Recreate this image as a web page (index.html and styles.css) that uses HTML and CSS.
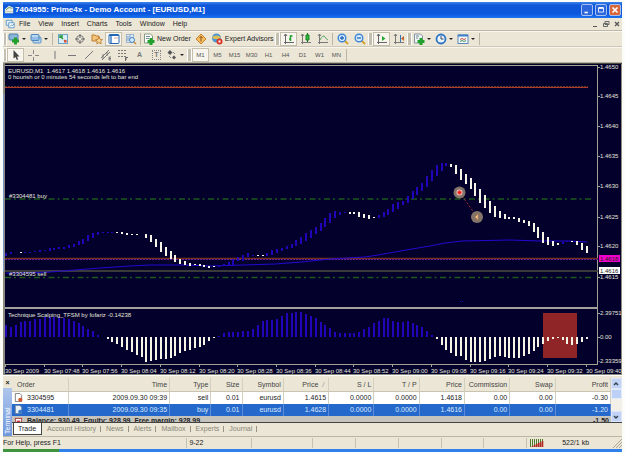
FILE: index.html
```html
<!DOCTYPE html>
<html lang="en">
<head>
<meta charset="utf-8">
<title>7404955: Prime4x - Demo Account - [EURUSD,M1]</title>
<link rel="stylesheet" href="styles.css">
</head>
<body>
<div class="window">
  <header class="titlebar">
    <svg class="icon" viewBox="0 0 12 12"><path d="M1 5 6 1l5 2v7H1z" fill="#e9eee4"/><path d="M2 6 6 3l4 1" stroke="#4d9655" fill="none"/><path d="M1 8h10" stroke="#b5bda8"/></svg>
    <h1>7404955: Prime4x - Demo Account - [EURUSD,M1]</h1>
    <div class="caption">
      <button class="cap" aria-label="Minimize"><svg viewBox="0 0 12 12"><path d="M3 9h4" stroke="#fff" stroke-width="2"/></svg></button>
      <button class="cap" aria-label="Restore"><svg viewBox="0 0 12 12"><path d="M3 3.5h6v5H3z" stroke="#fff" fill="none"/><path d="M3 3.5h6" stroke="#fff" stroke-width="2"/></svg></button>
      <button class="cap close" aria-label="Close"><svg viewBox="0 0 12 12"><path d="m3 3 6 6M9 3 3 9" stroke="#fff" stroke-width="2"/></svg></button>
    </div>
  </header>

  <nav class="menubar">
    <svg class="icon" viewBox="0 0 12 12"><path d="M1.5 1.500h7v6h-7z" fill="#e4f0fa" stroke="#4f8fc4"/><path d="M4.500 4.500h6.500v6H4.500z" fill="#fff" stroke="#4f8fc4"/><path d="m6 9 2-2 1 1 2-2" stroke="#3f7fb4" fill="none"/></svg>
    <button>File</button><button>View</button><button>Insert</button><button>Charts</button><button>Tools</button><button>Window</button><button>Help</button>
    <div class="mdi">
      <button aria-label="Minimize chart"><svg viewBox="0 0 8 8"><path d="M2 6.500h4" stroke="#555"/></svg></button>
      <button aria-label="Restore chart"><svg viewBox="0 0 8 8"><path d="M3 1.500h4v3H3zM1.500 3.500h4v3h-4z" stroke="#666" fill="none"/></svg></button>
      <button aria-label="Close chart"><svg viewBox="0 0 8 8"><path d="m2 2 4 4M6 2 2 6" stroke="#555" stroke-width="1.300"/></svg></button>
    </div>
  </nav>

  <div class="toolbar">
    <span class="grip"></span>
    <button class="tool drop" aria-label="New chart"><svg viewBox="0 0 12 12"><rect x="1" y="1" width="9" height="6" rx="1" fill="#8ab6dc" stroke="#4b7ea8"/><path d="M7.500 4.500v7M4 8h7" stroke="#23a02b" stroke-width="3"/></svg></button>
    <button class="tool drop" aria-label="Profiles"><svg viewBox="0 0 12 12"><rect x="3" y="4" width="8" height="6" rx="1" fill="#b9d5ee" stroke="#5e93c4"/><rect x="1" y="1.500" width="8" height="6" rx="1" fill="#8fbde6" stroke="#4f86bb"/><path d="M2 3h6" stroke="#e4f1fc"/></svg></button>
    <span class="sep"></span>
    <button class="tool" aria-label="Market watch"><svg viewBox="0 0 12 12"><rect x="1.500" y="1.500" width="9" height="9" fill="#d9ecf7" stroke="#6da6c6"/><path d="M3 5V3h3M3 3l3 3" stroke="#249a3a" stroke-width="1.500" fill="none"/><path d="M7 7l2 2M9 7v2H7" stroke="#d24b2c" stroke-width="1.200" fill="none"/></svg></button>
    <button class="tool" aria-label="Crosshair data"><svg viewBox="0 0 12 12"><circle cx="6" cy="6" r="3.500" fill="none" stroke="#777"/><path d="M6 1v4M6 7v4M1 6h4M7 6h4" stroke="#666"/></svg></button>
    <button class="tool" aria-label="Navigator"><svg viewBox="0 0 12 12"><path d="M1 2h3l1 1h3v5H1z" fill="#f2c67c" stroke="#c07b2c"/><path d="m8 4 1 2.300 2.500.3-1.800 1.700.5 2.500L8 9.600l-2.200 1.200.4-2.500-1.700-1.700 2.500-.3z" fill="#f8d896" stroke="#b8722a" stroke-width=".8"/></svg></button>
    <button class="tool pressed" aria-label="Terminal"><svg viewBox="0 0 12 12"><rect x="1" y="1.500" width="10" height="9" rx="1" fill="#fff" stroke="#2566b4"/><path d="M1 2.500h10" stroke="#2566b4"/><path d="M3 3v7" stroke="#6ea0d8" stroke-width="2"/><path d="M6 5h4" stroke="#d6a79c"/></svg></button>
    <button class="tool" aria-label="Strategy tester"><svg viewBox="0 0 12 12"><rect x="1.500" y="1.500" width="7" height="8" fill="#e4edf5" stroke="#9ab5cd"/><path d="M3 3v5M5 2v5" stroke="#7696bb"/><circle cx="7" cy="7" r="2.500" fill="#d4ebfc" stroke="#4686c4"/><path d="m9 9 2 2" stroke="#cb8b2e" stroke-width="1.500"/></svg></button>
    <span class="sep"></span>
    <button class="tool labelled"><svg viewBox="0 0 12 12"><path d="M1.500 1h6l2 2v7h-8z" fill="#fff" stroke="#829a82"/><path d="M3 3.500h4M3 5.500h3" stroke="#789"/><path d="M8 5v7M4.500 8.500h7" stroke="#22a02c" stroke-width="3"/></svg>New Order</button>
    <button class="tool" aria-label="MetaEditor"><svg viewBox="0 0 12 12"><path d="m6 1 5 5-5 5-5-5z" fill="#f4bd62" stroke="#c9842c"/><path d="M6 3.500v5M4.500 5 6 3.500 7.500 5" stroke="#8a5215" fill="none"/></svg></button>
    <button class="tool labelled"><svg viewBox="0 0 12 12"><circle cx="5.500" cy="5" r="4.500" fill="#4f97cf"/><path d="M1 4q4-3 9 0l-2 2H3z" fill="#dcc056"/><circle cx="8.500" cy="8.500" r="3" fill="#d8342a"/><path d="M7.500 7.500h2v2h-2z" fill="#fff"/></svg>Expert Advisors</button>
    <span class="grip wide"></span>
    <button class="tool pressed" aria-label="Bar chart"><svg viewBox="0 0 12 12"><path d="M2.500 1v10M1 9.500h10M1 3l1.500-2L4 3" stroke="#666" fill="none"/><path d="M7.500 2v6M7.500 3h2M6 6h1" stroke="#24a534" stroke-width="1.500"/></svg></button>
    <button class="tool" aria-label="Candlesticks"><svg viewBox="0 0 12 12"><path d="M2.500 1v10M1 9.500h10M1 3l1.500-2L4 3" stroke="#777" fill="none"/><path d="M7.500 0v9" stroke="#176e20"/><path d="M6 2h3v5H6z" fill="#2fbb3c" stroke="#178124"/></svg></button>
    <button class="tool" aria-label="Line chart"><svg viewBox="0 0 12 12"><path d="M2.500 1v10M1 9.500h10M1 3l1.500-2L4 3" stroke="#777" fill="none"/><path d="M3 7Q6 1 8 4t3 3" stroke="#5fa368" fill="none"/></svg></button>
    <span class="sep"></span>
    <button class="tool" aria-label="Zoom in"><svg viewBox="0 0 12 12"><path d="m7.500 7.500 3.500 3.500" stroke="#d4a12e" stroke-width="2"/><circle cx="5" cy="5" r="3.800" fill="#d8ecff" stroke="#3f86d4" stroke-width="1.400"/><path d="M5 3v4M3 5h4" stroke="#2468b4" stroke-width="1.300"/></svg></button>
    <button class="tool" aria-label="Zoom out"><svg viewBox="0 0 12 12"><path d="m7.500 7.500 3.500 3.500" stroke="#d4a12e" stroke-width="2"/><circle cx="5" cy="5" r="3.800" fill="#d8ecff" stroke="#3f86d4" stroke-width="1.400"/><path d="M3 5h4" stroke="#2468b4" stroke-width="1.300"/></svg></button>
    <span class="grip wide"></span>
    <button class="tool pressed" aria-label="Auto scroll"><svg viewBox="0 0 12 12"><path d="M2.500 1v10M1 9.500h10M1 3l1.500-2L4 3" stroke="#666" fill="none"/><path d="m6 3 3.500 2.500L6 8z" fill="#25a834"/></svg></button>
    <button class="tool" aria-label="Chart shift"><svg viewBox="0 0 12 12"><path d="M2.500 1v10M1 9.500h10M1 3l1.500-2L4 3" stroke="#777" fill="none"/><path d="M7.500 2v7" stroke="#3578b8"/><path d="m11 3-3 2.500L11 8z" fill="#c4602c"/></svg></button>
    <span class="grip wide"></span>
    <button class="tool drop" aria-label="Indicators"><svg viewBox="0 0 12 12"><path d="M1.500 1h6l2 2v7h-8z" fill="#eef3f6" stroke="#8795a2"/><path d="M3 3h3M3 5h2" stroke="#789"/><path d="M8 5v7M4.500 8.500h7" stroke="#22a02c" stroke-width="3"/></svg></button>
    <button class="tool drop" aria-label="Periods"><svg viewBox="0 0 12 12"><circle cx="6" cy="6" r="4.500" fill="#eaf5ff" stroke="#2f74c4" stroke-width="1.800"/><path d="M6 3v3h2.500" stroke="#345" fill="none"/></svg></button>
    <button class="tool drop" aria-label="Templates"><svg viewBox="0 0 12 12"><rect x="1" y="2" width="10" height="8.500" fill="#f5f8fb" stroke="#5b87b4"/><path d="M1 2.500h10" stroke="#3f81c9" stroke-width="2"/><path d="M3 6.500l2-1 2 1 2-1" stroke="#c0503d" fill="none"/><path d="M3 8.500l2-1 2 1 2-1" stroke="#419256" fill="none"/></svg></button>
    <span class="sep"></span>
  </div>

  <div class="toolbar lines">
    <span class="grip"></span>
    <button class="tool pressed" aria-label="Cursor"><svg viewBox="0 0 12 12"><path d="M3.500 1v8.500L5.500 8l1.300 3 1.400-.6L7 7.500h2.500z" fill="#444"/></svg></button>
    <button class="tool" aria-label="Crosshair"><svg viewBox="0 0 12 12"><path d="M6.500 1v4M6.500 8v4M1 6.500h4M8 6.500h4" stroke="#888"/></svg></button>
    <span class="grip wide plain"></span>
    <button class="tool" aria-label="Vertical line"><svg viewBox="0 0 12 12"><path d="M6 2v8" stroke="#777"/></svg></button>
    <button class="tool" aria-label="Horizontal line"><svg viewBox="0 0 12 12"><path d="M2 6.500h8" stroke="#777"/></svg></button>
    <button class="tool" aria-label="Trendline"><svg viewBox="0 0 12 12"><path d="m2 10 8-8" stroke="#777"/></svg></button>
    <button class="tool" aria-label="Channel"><svg viewBox="0 0 12 12"><path d="m1 9 8-8M2 11l8-8M3 5v5M7 3v4M9 8v3h2M9 9.500h2M9 8h2" stroke="#777" fill="none"/></svg></button>
    <button class="tool" aria-label="Fibonacci"><svg viewBox="0 0 12 12"><path d="M1 1.500h9M1 4.500h9M1 7.500h9" stroke="#777" stroke-dasharray="2 1"/><path d="M8.500 12V8.500H11M8.500 10H10" stroke="#666" fill="none"/></svg></button>
    <button class="tool letter" aria-label="Text">A</button>
    <button class="tool letter" aria-label="Text label"><span class="boxed">T</span></button>
    <button class="tool drop" aria-label="Arrows"><svg viewBox="0 0 12 12"><path d="m4 1 2.500 2.500L4 6 1.500 3.500zM8 6.500l2 2-2 2-2-2z" fill="#555"/><path d="m7 3 2 2M3 7l2 2" stroke="#888"/></svg></button>
    <span class="grip wide"></span>
    <button class="tool period pressed">M1</button><button class="tool period">M5</button><button class="tool period">M15</button><button class="tool period">M30</button><button class="tool period">H1</button><button class="tool period">H4</button><button class="tool period">D1</button><button class="tool period">W1</button><button class="tool period">MN</button>
    <span class="sep"></span>
  </div>

  <main class="chart">
    <svg id="chart" viewBox="3 63 619 312" role="img" aria-label="EURUSD one minute chart">
      <rect x="3" y="63" width="619" height="312" fill="#8c8a80"/>
      <rect x="3" y="94" width="1" height="178" fill="#7c96c8"/>
      <rect x="5" y="64" width="616" height="310" fill="#03012c"/>
      <rect x="5" y="63" width="617" height="1" fill="#4c4a44"/>
      <g class="frame">
        <path d="M5 65.500h593"/><path d="M597.500 65v300"/><path d="M5 364.500h593"/>
      </g>
      <rect x="5" y="307" width="593" height="2" fill="#a3a09e"/>
      <path d="M5 86.500h583" stroke="#5a3a20" stroke-dasharray="2 1"/>
      <path d="M5 87.500h583" stroke="#b23a2c"/>
      <path d="M5 199h588M5 277.500h588" stroke="#1d5a1c" stroke-width="1.600" stroke-dasharray="6 3 2 3.500"/>
      <path d="M5 258.500h593" stroke="#74301a" stroke-width="1.500"/>
      <path d="M5 259.500h593" stroke="#6a20a0" stroke-dasharray="2 1"/>
      <path d="M5 271h593" stroke="#4c4e3e" stroke-width="1.500"/>
      <rect x="543" y="313" width="34" height="45" fill="#8f2526"/>
      <polyline class="average" points="6,273 17,273 50,272 75,270 100,268 130,266 150,265 185,265 210,266 243,265 275,264 302,262 330,259 365,257 378,255 395,252 412,249 430,246 445,243 462,241 510,240 540,241 570,241 587,242"/>
      <g id="bars"></g>
      <path d="M460 301.500h1M462 301.500h1" stroke="#2008b8"/>
      <path d="m462 196 13 18" stroke="#a02c2c" stroke-dasharray="2 2"/>
      <circle cx="459.500" cy="192.500" r="6" fill="#83746a"/><circle cx="459.500" cy="192.500" r="3" fill="#e8c8c0"/><path d="M459.500 190.500v4M457.500 192.500h4" stroke="#f01818" stroke-width="2"/>
      <circle cx="477" cy="217" r="6" fill="#83746a"/><path d="m475 217 3-3v6z" fill="#e8c9a0" stroke="#c47b3c" stroke-width=".7"/>
      <text x="8" y="73" xml:space="preserve">EURUSD,M1  1.4617 1.4618 1.4616 1.4616</text>
      <text x="8" y="79">0 hourish or 0 minutes 54 seconds left to bar end</text>
      <text x="9" y="198">#3304481 buy</text>
      <text x="9" y="276">#3304595 sell</text>
      <text x="8" y="317">Technique Scalping_TFSM by fofariz -0.14238</text>
      <g id="axis"></g>
      <rect x="599" y="255" width="21" height="7" fill="#f000c8"/><text x="600" y="261" class="dark">1.4618</text>
      <rect x="599" y="267" width="21" height="7" fill="#fff"/><text x="600" y="273" class="dark">1.4616</text>
    </svg>
  </main>

  <section class="terminal">
    <aside class="side"><button class="side-close" aria-label="Close terminal">×</button><span class="side-name">Terminal</span></aside>
    <div class="panel">
      <div class="pane">
        <table>
          <colgroup><col class="c-order"><col class="c-time"><col class="c-type"><col class="c-size"><col class="c-type"><col class="c-num"><col class="c-num"><col class="c-num"><col class="c-num"><col class="c-num"><col class="c-num"><col class="c-profit"></colgroup>
          <thead><tr><th>Order</th><th>Time</th><th>Type</th><th>Size</th><th>Symbol</th><th>Price <i class="sort">&nbsp;/&nbsp;</i></th><th>S / L</th><th>T / P</th><th>Price</th><th>Commission</th><th>Swap</th><th>Profit</th></tr></thead>
          <tbody>
            <tr><td><svg class="doc" viewBox="0 0 10 10"><path d="M1.500.5h5l2 2v7h-7z" fill="#fff" stroke="#777"/><circle cx="7" cy="7.500" r="2.300" fill="#d4572c"/></svg>3304595</td><td>2009.09.30 09:39</td><td>sell</td><td>0.01</td><td>eurusd</td><td>1.4615</td><td>0.0000</td><td>0.0000</td><td>1.4618</td><td>0.00</td><td>0.00</td><td>-0.30</td></tr>
            <tr class="selected"><td><svg class="doc" viewBox="0 0 10 10"><path d="M1.500.5h5l2 2v7h-7z" fill="#e8f0fa" stroke="#789"/><circle cx="7" cy="7.500" r="2.300" fill="#3a78c8"/></svg>3304481</td><td>2009.09.30 09:35</td><td>buy</td><td>0.01</td><td>eurusd</td><td>1.4628</td><td>0.0000</td><td>0.0000</td><td>1.4616</td><td>0.00</td><td>0.00</td><td>-1.20</td></tr>
            <tr class="balance"><td colspan="11"><svg class="doc" viewBox="0 0 10 10"><rect x="1.500" y="1.500" width="7" height="8" fill="#fff" stroke="#a33"/><path d="M3 4h4v4H3z" fill="#c33"/></svg>Balance: 930.49&nbsp; Equity: 928.99&nbsp; Free margin: 928.99</td><td>-1.50</td></tr>
          </tbody>
        </table>
        <div class="scroll">
          <button aria-label="Scroll up"><svg viewBox="0 0 8 8"><path d="m2 5 2-2 2 2" stroke="#345" stroke-width="1.500" fill="none"/></svg></button>
          <span class="thumb"></span>
          <button aria-label="Scroll down"><svg viewBox="0 0 8 8"><path d="m2 3 2 2 2-2" stroke="#345" stroke-width="1.500" fill="none"/></svg></button>
        </div>
      </div>
      <nav class="tabs"><button class="active">Trade</button><button>Account History</button><button>News</button><button>Alerts</button><button>Mailbox</button><button>Experts</button><button>Journal</button></nav>
    </div>
  </section>

  <footer class="status">
    <span class="help">For Help, press F1</span><span class="profile">9-22</span><span class="cell first"></span><span class="cell"></span><span class="cell"></span><span class="cell"></span><span class="cell"></span><span class="cell"></span>
    <span class="net"><svg viewBox="0 0 14 8"><path d="M.5 0v8M2.500 0v7M4.500 0v6M6.500 0v5M8.500 0v4M10.500 0v3M12.500 0v2" stroke="#517a2c"/><path d="M2.500 7v1M4.500 6v2M6.500 5v3M8.500 4v4M10.500 3v5M12.500 2v6" stroke="#b02820" stroke-width="1.600"/></svg></span>
    <span class="traffic">522/1 kb</span>
    <svg class="resize" viewBox="0 0 10 10"><path d="M1 10 10 1M4 10l6-6M7 10l3-3" stroke="#aaa695"/></svg>
  </footer>
</div>
<div class="taskbar"><span class="start"></span></div>
<script src="chart.js"></script>
</body>
</html>
```
FILE: styles.css
```css
* { box-sizing: border-box; }

body {
  margin: 0;
  background: #fbfbf8;
  color: #222;
  font: 7px/10px "Liberation Sans", Arial, sans-serif;
}

button {
  border: 0;
  padding: 0;
  margin: 0;
  background: none;
  color: inherit;
  font: inherit;
}

svg { display: block; }

.window { margin: 2px 3px 0; background: #ebe6d6; }

.titlebar {
  display: flex;
  align-items: center;
  height: 16px;
  padding-left: 1px;
  background: linear-gradient(#3d86ee, #0f57d8 20%, #0b58de 75%, #1c74f0);
  color: #fff;
}
.titlebar h1 { flex: 1; margin: 0; padding-left: 1px; font-size: 8px; line-height: 12px; }
.icon { width: 10px; height: 10px; }
.caption { display: flex; gap: 2px; padding-right: 1px; }
.cap { width: 12px; height: 12px; border: 1px solid #a5c0f0; border-radius: 2px; background: #2c66dc; }
.cap svg { width: 10px; height: 10px; }
.close { background: #d8683c; }

.menubar { display: flex; align-items: center; gap: 8px; height: 13px; padding-left: 2px; border-bottom: 1px solid #bdb8a6; }
.menubar .icon { margin-right: -4px; }
.mdi { display: flex; gap: 3px; margin-left: auto; padding-right: 1px; }
.mdi svg { width: 8px; height: 8px; }

.toolbar { display: flex; align-items: center; height: 16px; border-top: 1px solid #f8f6ee; border-bottom: 1px solid #cdc8b6; }
.lines { border-bottom-color: #b4b0a0; }
.tool { display: flex; align-items: center; justify-content: center; width: 17px; height: 14px; }
.tool svg { flex: none; width: 12px; height: 12px; }
.pressed { border: 1px solid #c4bfad; background: #f7f5ee; }
.drop { width: 22px; justify-content: flex-start; padding-left: 1px; }
.drop::after { content: ""; margin-left: 2px; border: 2px solid transparent; border-top-color: #222; border-bottom: 0; }
.labelled { width: auto; gap: 2px; padding: 0 2px 0 1px; }
.letter { font-weight: bold; color: #777; }
.boxed { width: 9px; border: 1px dotted #888; line-height: 8px; }
.period { font-size: 6px; color: #555; }
.grip { flex: none; width: 4px; height: 12px; border-left: 1px solid #fff; border-right: 1px solid #fff; background: #c4bfae; }
.wide { width: 5px; }
.plain { background: none; border: 0; }
.sep { flex: none; width: 1px; height: 12px; margin: 0 1px; background: #bbb6a4; }

.chart svg { width: 100%; height: auto; }
.chart text { fill: #e4e4da; font: 6px "Liberation Sans", Arial, sans-serif; }
.chart .dark { fill: #222; }
.frame { stroke: #a3a18f; }
.average { fill: none; stroke: #2408d0; stroke-width: 1; }
.up { fill: #2105b8; }
.down { fill: #f6f4e6; }

.terminal { display: flex; padding-top: 2px; border-top: 1px solid #fff; }
.side { display: flex; flex-direction: column; width: 9px; }
.side-close { height: 10px; font-weight: bold; line-height: 10px; }
.side-name { flex: 1; background: linear-gradient(#6e97dc, #aec6ec); color: #fff; line-height: 9px; text-align: left; writing-mode: vertical-rl; transform: rotate(180deg); padding-top: 2px; }
.panel { flex: 1; min-width: 0; }
.pane { display: flex; align-items: flex-start; height: 45px; overflow: hidden; border-bottom: 1px solid #444; background: #c5c3bd; }

table { flex: 1; width: 100%; table-layout: fixed; border-collapse: separate; border-spacing: 0; }
.c-order { width: 57px; }
.c-time { width: 100px; }
.c-type { width: 41px; }
.c-size { width: 31px; }
.c-num { width: 45px; }
.c-profit { width: 55px; }
th, td { height: 12px; padding: 0 2px; border-right: 1px solid #d4d0c0; text-align: right; font-weight: normal; line-height: 12px; white-space: nowrap; }
th { height: 14px; background: #ebe6d6; border-bottom: 1px solid #c9c4b2; color: #444; }
th:first-child { padding-left: 5px; text-align: left; }
td { background: #fff; }
td:first-child { text-align: left; }
.doc { display: inline-block; width: 9px; height: 9px; margin: 1px 4px 0 0; vertical-align: top; }
.selected td { background: #2468cc; border-color: #5a8cd8; color: #dce8fa; }
.balance td { background: #c5c3bd; border: 0; color: #222; font-weight: bold; line-height: 10px; vertical-align: top; }
.sort { color: #999; }

.scroll { display: flex; flex-direction: column; width: 11px; height: 44px; background: #f2f0e8; }
.scroll button { height: 11px; border: 1px solid #dce6fa; background: #c3d3f6; }
.scroll svg { width: 8px; height: 8px; }
.thumb { height: 10px; margin-bottom: auto; border: 1px solid #e4ecfc; background: #bccff4; }

.tabs { display: flex; align-items: flex-start; height: 13px; color: #8a8678; }
.tabs button { position: relative; height: 12px; padding: 0 5px; }
.tabs button:not(.active)::after { content: ""; position: absolute; right: 0; top: 3px; height: 6px; border-right: 1px solid #999482; }
.tabs .active { margin-left: 1px; padding: 0 5px 0 4px; border: 1px solid #444; border-top: 0; background: #fff; color: #222; }

.status { display: flex; align-items: center; height: 13px; border-top: 1px solid #bcb7a5; }
.status span { height: 10px; }
.help { flex: 184; }
.profile { flex: 62; padding-left: 2px; border-left: 1px solid #c6c1af; }
.cell { flex: 42; border-left: 1px solid #c6c1af; }
.first { flex: 60; }
.net { flex: 27; padding: 1px 0 0 3px; border-left: 1px solid #c6c1af; }
.net svg { width: 14px; height: 8px; }
.traffic { flex: 50; padding-left: 5px; }
.resize { width: 10px; height: 10px; }

.taskbar { height: 3px; margin: 0 3px; background: #2f80e8; }
.start { display: block; width: 56px; height: 3px; background: #3f9440; }
```
FILE: chart.js
```js
const STEP = 4.84;
const FIRST = 6;
const ZERO = 337;

// Candle bodies, [top, bottom], one entry per minute.
const candles = [
  [253,256],[252,254],[253,253],[252,253],[252,253],[252,253],[251,252],[250,252],[250,251],[248,251],
  [248,250],[247,249],[247,249],[245,248],[244,247],[241,245],[239,244],[235,241],[233,238],[232,235],
  [232,233],[232,233],[232,233],[232,233],[232,234],[233,235],[234,235],[234,235],[234,234],[234,238],
  [235,242],[239,247],[242,252],[247,256],[251,259],[255,262],[259,264],[261,265],[263,266],[264,265],
  [264,266],[265,267],[266,268],[266,267],[266,267],[264,266],[262,265],[259,265],[257,261],[255,261],
  [253,257],[255,256],[255,256],[255,256],[253,256],[250,255],[249,253],[248,251],[246,249],[244,248],
  [240,246],[237,244],[233,241],[230,238],[227,234],[223,231],[218,227],[213,223],[211,218],[212,215],
  [212,213],[212,214],[212,214],[212,217],[214,218],[215,219],[217,218],[215,218],[212,217],[209,215],
  [204,212],[202,209],[201,205],[196,203],[191,199],[187,195],[183,191],[176,187],[170,181],[165,176],
  [163,171],[163,166],[164,167],[165,174],[169,180],[174,184],[178,189],[183,196],[189,203],[195,208],
  [201,213],[206,217],[211,218],[214,219],[217,219],[217,219],[218,222],[220,223],[221,226],[223,232],
  [227,238],[232,243],[237,245],[241,246],[243,245],[242,244],[241,242],[241,242],[241,245],[243,250],[246,253]
];

// Index ranges in which the candles are drawn in the falling colour.
const falling = [[3,3],[23,43],[52,53],[71,76],[92,114],[117,120]];

// Far end of each oscillator bar.
const oscillator = [
  325,327,325,322,321,321,319,319,317,317,317,317,318,319,321,323,326,329,331,335,
  337,339,342,344,347,350,352,355,357,362,361,360,359,359,358,356,353,351,350,348,
  347,345,341,338,336,333,332,332,332,331,331,329,325,321,320,320,319,316,313,313,
  312,312,314,316,318,322,325,328,332,333,333,333,333,332,329,327,323,321,318,318,
  321,322,322,321,323,325,327,331,335,339,345,350,353,356,356,360,362,362,362,361,
  359,357,356,357,358,358,358,356,354,351,347,344,341,339,338,340,344,345,344,342,339
];

const NS = "http://www.w3.org/2000/svg";
function add(parent, name, attrs, text) {
  const el = document.createElementNS(NS, name);
  for (const key in attrs) el.setAttribute(key, attrs[key]);
  if (text) el.textContent = text;
  parent.appendChild(el);
}

const bars = document.getElementById("bars");
const axis = document.getElementById("axis");
const slot = i => Math.round(FIRST + i * STEP) - 1;

candles.forEach(([top, bottom], i) => {
  const isDown = falling.some(([a, b]) => i >= a && i <= b);
  add(bars, "rect", { x: slot(i), y: top, width: 2, height: bottom - top, class: isDown ? "down" : "up" });
});
oscillator.forEach((end, i) => {
  add(bars, "rect", {
    x: slot(i), y: Math.min(end, ZERO), width: 2, height: Math.abs(end - ZERO),
    class: end > ZERO ? "down" : "up"
  });
});

[["1.4650", 67], ["1.4645", 96], ["1.4640", 126], ["1.4635", 156], ["1.4630", 186],
 ["1.4625", 217], ["1.4620", 246], ["1.4615", 277], ["2.39751", 313], ["0.00", 337], ["-2.33359", 361]
].forEach(([label, y]) => {
  const long = label.length > 7;
  if (!long) add(axis, "rect", { x: 598, y: y, width: 2, height: 1, fill: "#a3a18f" });
  add(axis, "text", { x: long ? 598 : 600, y: y + 2 }, label);
});

["30 Sep 2009", "30 Sep 07:48", "30 Sep 07:56", "30 Sep 08:04", "30 Sep 08:12", "30 Sep 08:20",
 "30 Sep 08:28", "30 Sep 08:36", "30 Sep 08:44", "30 Sep 08:52", "30 Sep 09:00", "30 Sep 09:08",
 "30 Sep 09:16", "30 Sep 09:24", "30 Sep 09:32", "30 Sep 09:40"
].forEach((label, i) => {
  const x = Math.round(5 + i * 8 * STEP);
  add(axis, "rect", { x: x, y: 365, width: 1, height: 2, fill: "#a3a18f" });
  add(axis, "text", { x: x, y: 373 }, label);
});
```
